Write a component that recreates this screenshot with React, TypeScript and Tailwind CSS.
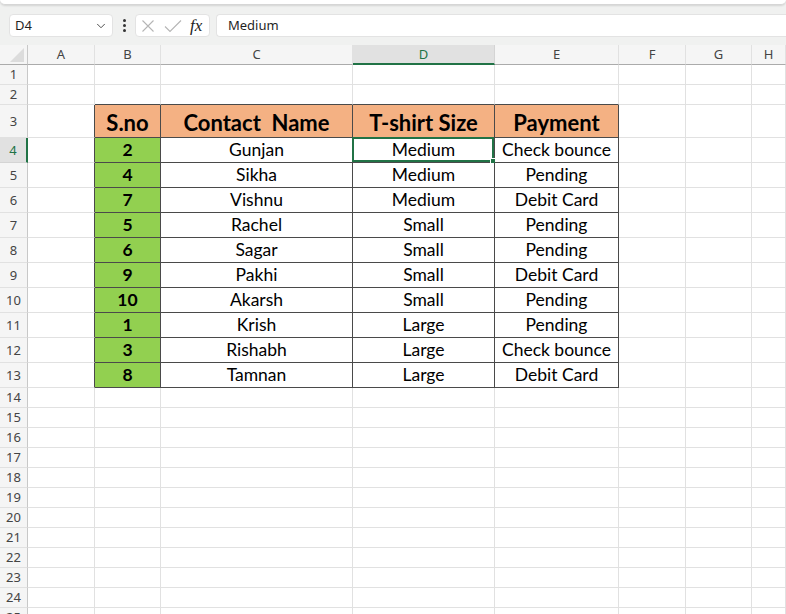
import { ChevronDown } from "lucide-react";

const COLS = ["A", "B", "C", "D", "E", "F", "G", "H"];

const DATA: [string, string, string, string][] = [
  ["2", "Gunjan", "Medium", "Check bounce"],
  ["4", "Sikha", "Medium", "Pending"],
  ["7", "Vishnu", "Medium", "Debit Card"],
  ["5", "Rachel", "Small", "Pending"],
  ["6", "Sagar", "Small", "Pending"],
  ["9", "Pakhi", "Small", "Debit Card"],
  ["10", "Akarsh", "Small", "Pending"],
  ["1", "Krish", "Large", "Pending"],
  ["3", "Rishabh", "Large", "Check bounce"],
  ["8", "Tamnan", "Large", "Debit Card"],
];

const HEADERS = ["S.no", "Contact  Name", "T-shirt Size", "Payment"];

// fixed column widths, same as the sheet
const GRID =
  "grid grid-rows-1 grid-cols-[28px_67px_66px_192px_142px_124px_67px_66px_1fr]";

const rowHeight = (r: number) => {
  if (r === 3) return "h-[33px]";
  if (r >= 4 && r <= 13) return "h-[25px]";
  return "h-5";
};

const FormulaBar = () => (
  <div className="h-[45px] bg-[#f0f1f0]">
    <div className="h-[5px] rounded-b-md border-b border-[#d6d6d6] bg-white shadow-[0_1px_2px_rgba(0,0,0,0.12)]" />
    <div className="flex items-center pt-[9px]">
      <div className="ml-[9px] flex h-[23px] w-[104px] items-center justify-between rounded-[4px] border border-[#e3e3e3] bg-white pl-[5px] pr-[4px] font-['Noto_Sans',sans-serif] text-[13px] text-[#1f1f1f]">
        <span>D4</span>
        <ChevronDown size={14} strokeWidth={1.6} className="text-[#444]" />
      </div>
      <div className="ml-[9px] flex w-[4px] flex-col items-center gap-[2px]">
        <span className="h-[3px] w-[3px] rounded-full bg-[#333]" />
        <span className="h-[3px] w-[3px] rounded-full bg-[#333]" />
        <span className="h-[3px] w-[3px] rounded-full bg-[#333]" />
      </div>
      <div className="ml-[9px] flex h-[23px] w-[75px] items-center rounded-[4px] border border-[#e3e3e3] bg-white">
        <svg width="14" height="14" viewBox="0 0 14 14" className="ml-[5px]">
          <path d="M1.5 1.5 L12.5 12.5 M12.5 1.5 L1.5 12.5" stroke="#b5b5b5" strokeWidth="1.1" fill="none" />
        </svg>
        <svg width="18" height="14" viewBox="0 0 18 14" className="ml-[9px]">
          <path d="M1 7.5 L6 12.5 L17 1.5" stroke="#b5b5b5" strokeWidth="1.1" fill="none" />
        </svg>
        <span className="ml-[8px] font-['Liberation_Serif',serif] text-[17px] leading-none italic text-[#222]">
          fx
        </span>
      </div>
      <div className="ml-[6px] flex h-[23px] flex-1 items-center rounded-l-[4px] border border-r-0 border-[#e3e3e3] bg-white pl-[11px] font-['Noto_Sans',sans-serif] text-[13px] text-[#1f1f1f]">
        Medium
      </div>
    </div>
  </div>
);

const ColumnHeaders = () => (
  <div className={`${GRID} h-5 font-['Noto_Sans',sans-serif] text-[13px] leading-none text-[#444]`}>
    <div className="relative border-r border-b border-r-[#c8c8c8] border-b-[#ababab] bg-[#f5f5f5]">
      <svg width="14" height="14" viewBox="0 0 14 14" className="absolute right-[3px] bottom-[2px]">
        <path d="M14 0 L14 14 L0 14 Z" fill="#dcdcdc" />
      </svg>
    </div>
    {COLS.map((c) =>
      c === "D" ? (
        <div
          key={c}
          className="flex items-center justify-center border-r border-b-2 border-r-[#d4d4d4] border-b-[#217346] bg-[#e1e1e1] text-[#217346]"
        >
          {c}
        </div>
      ) : (
        <div
          key={c}
          className="flex items-center justify-center border-r border-b border-r-[#e1e1e1] border-b-[#ababab] bg-[#f5f5f5]"
        >
          {c}
        </div>
      )
    )}
  </div>
);

const cellClass = (r: number, c: number) => {
  const inTable = r >= 3 && r <= 13 && c >= 1 && c <= 4;
  const leftOfTable = c === 0 && r >= 3 && r <= 13;
  const aboveTable = r === 2 && c >= 1 && c <= 4;
  const right = inTable || leftOfTable ? "border-r-[#4a4a4a]" : "border-r-[#e1e1e1]";
  const bottom = inTable || aboveTable ? "border-b-[#4a4a4a]" : "border-b-[#e1e1e1]";
  let bg = "bg-white";
  if (r === 3 && inTable) bg = "bg-[#f4b183]";
  else if (r >= 4 && r <= 13 && c === 1) bg = "bg-[#92d050]";
  return `relative flex min-h-0 items-center justify-center border-r border-b ${right} ${bottom} ${bg}`;
};

const cellText = (r: number, c: number) => {
  if (r === 3 && c >= 1 && c <= 4) return HEADERS[c - 1];
  if (r >= 4 && r <= 13 && c >= 1 && c <= 4) return DATA[r - 4][c - 1];
  return "";
};

const SheetRow = ({ r }: { r: number }) => {
  const selected = r === 4;
  return (
    <div className={`${GRID} ${rowHeight(r)}`}>
      {selected ? (
        <div className="flex min-h-0 items-center justify-center border-r-2 border-b border-r-[#217346] border-b-[#d4d4d4] bg-[#e1e1e1] font-['Noto_Sans',sans-serif] text-[13px] leading-none text-[#217346]">
          {r}
        </div>
      ) : (
        <div className="flex min-h-0 items-center justify-center border-r border-b border-r-[#c8c8c8] border-b-[#e1e1e1] bg-[#f5f5f5] font-['Noto_Sans',sans-serif] text-[13px] leading-none text-[#444]">
          {r}
        </div>
      )}
      {COLS.map((_, c) => {
        const text = cellText(r, c);
        const header = r === 3;
        const bold = header || c === 1;
        return (
          <div key={c} className={cellClass(r, c)}>
            {text && (
              <span
                className={`whitespace-pre font-['Lato',sans-serif] leading-none text-black ${
                  header ? "pt-[3px] text-[22px]" : "text-[17.5px]"
                } ${bold ? "font-bold" : ""}`}
              >
                {text}
              </span>
            )}
            {selected && c === 3 && (
              <div className="absolute -top-px -left-px h-[calc(100%+1px)] w-[calc(100%+1px)] border-2 border-[#217346]">
                <span className="absolute -right-[4px] -bottom-[4px] h-[6px] w-[6px] border border-white bg-[#217346]" />
              </div>
            )}
          </div>
        );
      })}
    </div>
  );
};

export default function App() {
  const rows = Array.from({ length: 25 }, (_, i) => i + 1);
  return (
    <div className="h-[614px] w-[786px] overflow-hidden bg-white">
      <FormulaBar />
      <ColumnHeaders />
      {rows.map((r) => (
        <SheetRow key={r} r={r} />
      ))}
    </div>
  );
}
